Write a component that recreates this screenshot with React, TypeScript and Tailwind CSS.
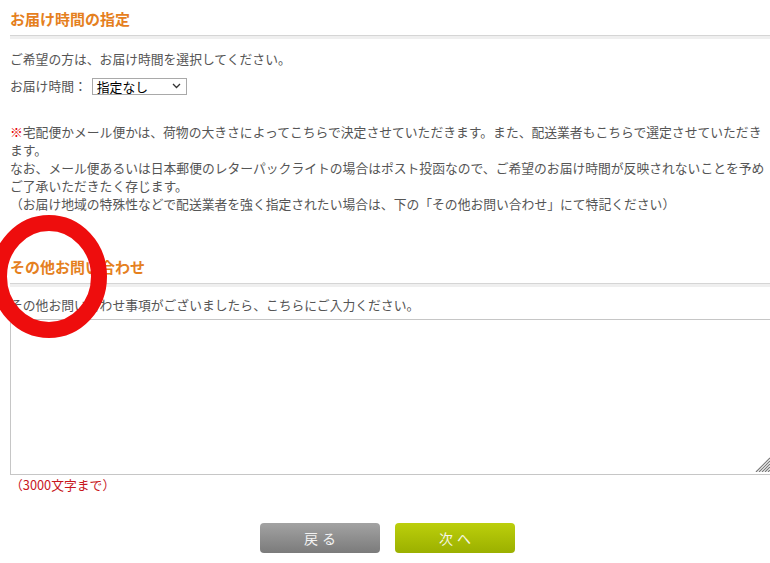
import React from "react";

function Heading({ children }: { children: React.ReactNode }) {
  return (
    <div>
      <h2 className="h-[20px] leading-[20px] text-[15px] font-bold text-[#e5801e] pl-[10px]">
        {children}
      </h2>
      <div className="mt-[6px] ml-[10px] h-[4px] border-t border-[#d5d5d5] bg-[#efefef]" />
    </div>
  );
}

export default function App() {
  return (
    <div
      className="relative w-[770px] h-[563px] overflow-hidden bg-white text-[12.8px] leading-[18px] text-[#555]"
      style={{ fontFamily: '"Noto Sans CJK JP", "Noto Sans", sans-serif' }}
    >
      <div className="pt-[9px]">
        <Heading>お届け時間の指定</Heading>

        <p className="mt-[11px] pl-[10px]">ご希望の方は、お届け時間を選択してください。</p>

        <div className="mt-[9px] pl-[10px] flex items-center h-[18px]">
          <span>お届け時間：</span>
          <div className="ml-[5px] w-[95px] h-[17px] border border-[#a9a9a9] bg-white flex items-center justify-between pl-[4px] pr-[5px] text-black text-[12.8px] leading-[15px]">
            <span>指定なし</span>
            <svg width="9" height="6" viewBox="0 0 9 6" fill="none">
              <path d="M1 1 L4.5 4.5 L8 1" stroke="#333" strokeWidth="1.3" />
            </svg>
          </div>
        </div>

        <p className="mt-[28px] pl-[10px] whitespace-nowrap">
          <span className="text-[#e60000]">※</span>
          宅配便かメール便かは、荷物の大きさによってこちらで決定させていただきます。また、配送業者もこちらで選定させていただき
          <br />
          ます。
          <br />
          なお、メール便あるいは日本郵便のレターパックライトの場合はポスト投函なので、ご希望のお届け時間が反映されないことを予め
          <br />
          ご了承いただきたく存じます。
          <br />
          （お届け地域の特殊性などで配送業者を強く指定されたい場合は、下の「その他お問い合わせ」にて特記ください）
        </p>

        <div className="mt-[44px]">
          <Heading>その他お問い合わせ</Heading>
        </div>

        <p className="mt-[9px] pl-[10px]">その他お問い合わせ事項がございましたら、こちらにご入力ください。</p>

        <div className="relative mt-[5px] ml-[10px] w-[760px] h-[156px]">
          <textarea
            aria-label="その他お問い合わせ"
            className="block w-[766px] h-[156px] border border-[#c6c6c6] bg-white resize-none outline-none"
          />
          <svg
            className="absolute left-[745px] top-[138px]"
            width="15"
            height="15"
            viewBox="0 0 15 15"
          >
            <g stroke="#7a7a7a" strokeWidth="1.2">
              <line x1="15" y1="1" x2="1" y2="15" />
              <line x1="15" y1="4" x2="4" y2="15" />
              <line x1="15" y1="7" x2="7" y2="15" />
              <line x1="15" y1="10" x2="10" y2="15" />
              <line x1="15" y1="13" x2="13" y2="15" />
            </g>
          </svg>
        </div>

        <p className="mt-[1px] pl-[10px] text-[#c8161d]">（3000文字まで）</p>

        <div className="mt-[29px] flex justify-center gap-[15px] pl-[5px]">
          <button className="w-[120px] h-[30px] rounded-[4px] bg-gradient-to-b from-[#a3a3a3] to-[#7b7b7b] text-[#f2f2f2] text-[14px] tracking-[4px] pl-[4px]">
            戻る
          </button>
          <button className="w-[120px] h-[30px] rounded-[4px] bg-gradient-to-b from-[#bccf0c] to-[#9bb000] text-[#f7f7e8] text-[14px] tracking-[4px] pl-[4px]">
            次へ
          </button>
        </div>
      </div>

      <svg
        className="absolute left-0 top-[200px] pointer-events-none"
        width="130"
        height="150"
        viewBox="0 0 130 150"
      >
        <ellipse cx="49" cy="76.5" rx="50" ry="53.5" fill="none" stroke="#ee0d0d" strokeWidth="16" />
      </svg>
    </div>
  );
}
